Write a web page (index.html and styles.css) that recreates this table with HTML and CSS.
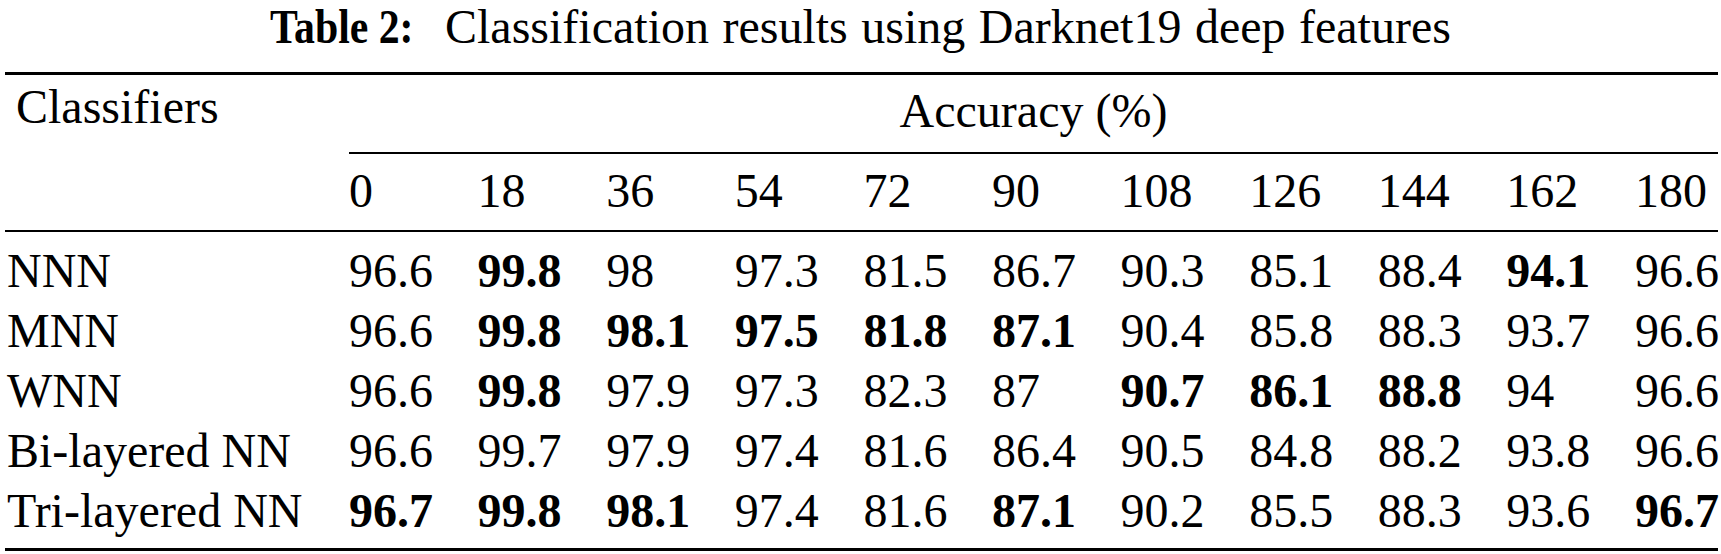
FILE: index.html
```html
<!DOCTYPE html>
<html lang="en">
<head>
  <meta charset="UTF-8">
  <title>Table 2</title>
  <link rel="stylesheet" href="styles.css">
</head>
<body>

  <p class="caption"><span class="label">Table 2:</span><span class="caption-text">Classification results using Darknet19 deep features</span></p>

  <table class="results">
    <colgroup>
      <col class="col-name">
      <col class="col-num"><col class="col-num"><col class="col-num"><col class="col-num"><col class="col-num">
      <col class="col-num"><col class="col-num"><col class="col-num"><col class="col-num"><col class="col-num">
      <col>
    </colgroup>
    <thead>
      <tr class="top-row">
        <th class="head-name" rowspan="2">Classifiers</th>
        <th class="accuracy" colspan="11">Accuracy (%)</th>
      </tr>
      <tr class="angles">
        <th>0</th><th>18</th><th>36</th><th>54</th><th>72</th><th>90</th>
        <th>108</th><th>126</th><th>144</th><th>162</th><th>180</th>
      </tr>
    </thead>
    <tbody>
      <tr>
        <td class="name">NNN</td>
        <td>96.6</td><td class="best">99.8</td><td>98</td><td>97.3</td><td>81.5</td><td>86.7</td>
        <td>90.3</td><td>85.1</td><td>88.4</td><td class="best">94.1</td><td>96.6</td>
      </tr>
      <tr>
        <td class="name">MNN</td>
        <td>96.6</td><td class="best">99.8</td><td class="best">98.1</td><td class="best">97.5</td><td class="best">81.8</td><td class="best">87.1</td>
        <td>90.4</td><td>85.8</td><td>88.3</td><td>93.7</td><td>96.6</td>
      </tr>
      <tr>
        <td class="name">WNN</td>
        <td>96.6</td><td class="best">99.8</td><td>97.9</td><td>97.3</td><td>82.3</td><td>87</td>
        <td class="best">90.7</td><td class="best">86.1</td><td class="best">88.8</td><td>94</td><td>96.6</td>
      </tr>
      <tr>
        <td class="name">Bi-layered NN</td>
        <td>96.6</td><td>99.7</td><td>97.9</td><td>97.4</td><td>81.6</td><td>86.4</td>
        <td>90.5</td><td>84.8</td><td>88.2</td><td>93.8</td><td>96.6</td>
      </tr>
      <tr>
        <td class="name">Tri-layered NN</td>
        <td class="best">96.7</td><td class="best">99.8</td><td class="best">98.1</td><td>97.4</td><td>81.6</td><td class="best">87.1</td>
        <td>90.2</td><td>85.5</td><td>88.3</td><td>93.6</td><td class="best">96.7</td>
      </tr>
    </tbody>
  </table>

</body>
</html>
```

FILE: styles.css
```css
body {
  margin: 0;
  background-color: #fff;
  color: #000;
  font-family: "Liberation Serif", serif;
}

.caption {
  margin: 0 0 23px;
  padding-top: 5px;
  font-size: 48px;
  line-height: 44px;
  text-align: center;
  white-space: nowrap;
}

/* the bold label in the caption is set narrower than the body text */
.caption .label {
  display: inline-block;
  font-weight: bold;
  transform: scaleX(0.87);
  transform-origin: left center;
  margin-right: 10px;
}

.caption-text {
  word-spacing: 1.5px;
}

.results {
  margin-left: 5px;
  width: 1713px;
  border-collapse: separate;
  border-spacing: 0;
  table-layout: fixed;
  font-size: 48px;
  line-height: 60px;
}

.col-name {
  width: 344px;
}

.col-num {
  width: 128.6px;
}

.results th,
.results td {
  padding: 0;
  text-align: left;
  font-weight: normal;
  white-space: nowrap;
}

.top-row th {
  border-top: 3px solid #000;
  padding-top: 6px;
  padding-bottom: 11px;
}

.top-row .head-name {
  vertical-align: top;
  padding-top: 2px;
  padding-bottom: 0;
  padding-left: 11px;
  border-bottom: 2px solid #000;
}

.top-row .accuracy {
  text-align: center;
  border-bottom: 2px solid #000;
}

.angles th {
  padding-top: 7px;
  padding-bottom: 9px;
  border-bottom: 2px solid #000;
}

.results tbody tr:first-child td {
  padding-top: 9px;
}

.results tbody tr:last-child td {
  padding-bottom: 7px;
  border-bottom: 3px solid #000;
}

.results .name {
  padding-left: 2px;
}

.results .best {
  font-weight: bold;
}
```
